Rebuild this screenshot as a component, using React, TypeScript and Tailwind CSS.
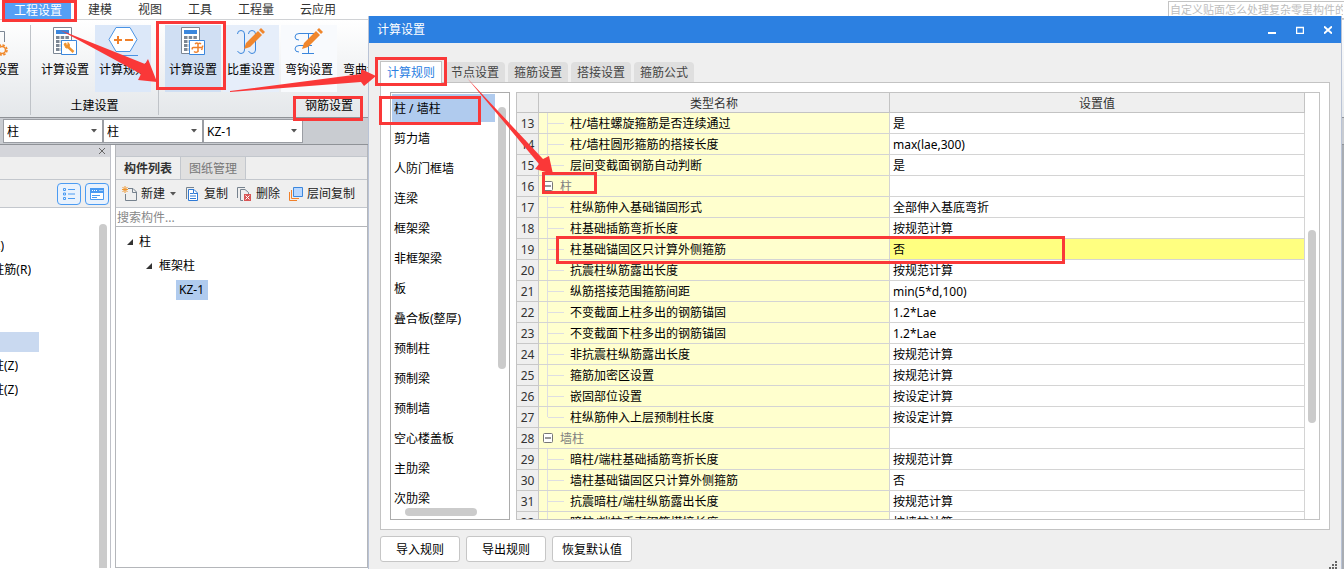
import type { ReactNode } from 'react';

const MENUS = ['建模', '视图', '工具', '工程量', '云应用'];

const DIALOG_TABS = ['节点设置', '箍筋设置', '搭接设置', '箍筋公式'];

const CATEGORIES = [
  '柱 / 墙柱', '剪力墙', '人防门框墙', '连梁', '框架梁', '非框架梁', '板',
  '叠合板(整厚)', '预制柱', '预制梁', '预制墙', '空心楼盖板', '主肋梁', '次肋梁',
];

type Row = { no: number; name: string; value?: string; group?: boolean; last?: boolean; active?: boolean };

const ROWS: Row[] = [
  { no: 13, name: '柱/墙柱螺旋箍筋是否连续通过', value: '是' },
  { no: 14, name: '柱/墙柱圆形箍筋的搭接长度', value: 'max(lae,300)' },
  { no: 15, name: '层间变截面钢筋自动判断', value: '是', last: true },
  { no: 16, name: '柱', group: true },
  { no: 17, name: '柱纵筋伸入基础锚固形式', value: '全部伸入基底弯折' },
  { no: 18, name: '柱基础插筋弯折长度', value: '按规范计算' },
  { no: 19, name: '柱基础锚固区只计算外侧箍筋', value: '否', active: true },
  { no: 20, name: '抗震柱纵筋露出长度', value: '按规范计算' },
  { no: 21, name: '纵筋搭接范围箍筋间距', value: 'min(5*d,100)' },
  { no: 22, name: '不变截面上柱多出的钢筋锚固', value: '1.2*Lae' },
  { no: 23, name: '不变截面下柱多出的钢筋锚固', value: '1.2*Lae' },
  { no: 24, name: '非抗震柱纵筋露出长度', value: '按规范计算' },
  { no: 25, name: '箍筋加密区设置', value: '按规范计算' },
  { no: 26, name: '嵌固部位设置', value: '按设定计算' },
  { no: 27, name: '柱纵筋伸入上层预制柱长度', value: '按设定计算', last: true },
  { no: 28, name: '墙柱', group: true },
  { no: 29, name: '暗柱/端柱基础插筋弯折长度', value: '按规范计算' },
  { no: 30, name: '墙柱基础锚固区只计算外侧箍筋', value: '否' },
  { no: 31, name: '抗震暗柱/端柱纵筋露出长度', value: '按规范计算' },
  { no: 32, name: '暗柱/端柱垂直钢筋搭接长度', value: '按墙柱计算' },
];

function GearIcon() {
  return (
    <svg width="30" height="30" viewBox="0 0 30 30" fill="none">
      <path d="M6 5.500h18.500V16" stroke="#7c8794" />
      <circle cx="22" cy="24" r="3.500" stroke="#f0882a" strokeWidth="1.500" />
      <circle cx="22" cy="24" r="5" stroke="#f0882a" strokeWidth="1.500" strokeDasharray="2.500 1.400" />
    </svg>
  );
}

function Calculator({ children }: { children: ReactNode }) {
  return (
    <svg width="30" height="30" viewBox="0 0 30 30" fill="none">
      <path d="M3.500 1.500h18v26h-18z" fill="#fff" stroke="#7c8794" />
      <path d="M6 4h13v4H6z" fill="#3b87dd" />
      <path d="M6 11.500h13M6 15.500h13M6 19.500h6M6 23.500h6" stroke="#7c8794" strokeWidth="3" strokeDasharray="3.500 1.200" />
      <path d="M11.500 14.500h15v14h-15z" fill="#fff" stroke="#3b87dd" />
      {children}
    </svg>
  );
}

function WrenchCalcIcon() {
  return (
    <Calculator>
      <path d="M17.500 20.500l6 5.500" stroke="#f0932f" strokeWidth="2.500" />
      <path d="M14 18l2-1v2h2v-2.500l1.500 2-.5 3-3 .5z" fill="#f0932f" stroke="#f0932f" />
    </Calculator>
  );
}

function RebarCalcIcon() {
  return (
    <Calculator>
      <path d="M17 18q2-2 3 0v7.500q-2 1.500-4 0M20 18q1.500-1.500 3 0M14.500 23.500q-1-2 1-2h8q1.500 0 1-2M23.500 24l1-2" stroke="#f0802a" strokeWidth="1.500" />
    </Calculator>
  );
}

function HexIcon() {
  return (
    <svg width="30" height="30" viewBox="0 0 30 30" fill="none">
      <path d="M8 1.500h14l7 12-7 12H8L1 13.500z" fill="#fff" stroke="#4a93e4" />
      <path d="M3 29.500h27" stroke="#4a93e4" />
      <path d="M6 14h8M10 10v8M17 14h8" stroke="#f0802a" strokeWidth="2" />
    </svg>
  );
}

function Pencil() {
  return <path d="M8 23l2-6L22 5l4 4-12 12zM23 4l2-2 4 4-2 2z" fill="#f0862c" />;
}

function WeightIcon() {
  return (
    <svg width="30" height="30" viewBox="0 0 30 30" fill="none">
      <path d="M1.500 8q0-3.500 3.500-3.500T8.500 8v16q0 3.500-3.500 3.500-2 0-3.500-2.500M12.500 8q0-3.500 3.500-3.500T19.500 8v16q0 3.500-3.500 3.500-2 0-3.500-2.500" stroke="#3b87dd" />
      <Pencil />
    </svg>
  );
}

function HookIcon() {
  return (
    <svg width="30" height="30" viewBox="0 0 30 30" fill="none">
      <path d="M20 7.500H5q-4 0-4 3.500 0 3 4 3M14.500 8v19M8 27.500h12M18 19.500H5q-4 0-4 3.500 0 3 4 3" stroke="#3b87dd" />
      <Pencil />
    </svg>
  );
}

function RibbonButton({ label, icon, tone = '' }: { label: string; icon?: ReactNode; tone?: string }) {
  return (
    <button className={`flex h-[67px] w-14 shrink-0 flex-col items-center pt-px whitespace-nowrap ${tone}`}>
      <span className="h-[34px]">{icon}</span>
      <span className="leading-5">{label}</span>
    </button>
  );
}

function RibbonGroup({ title, className, children }: { title: string; className: string; children?: ReactNode }) {
  return (
    <div className={`flex shrink-0 flex-col border-r border-[#bfc3c8] ${className}`}>
      <div className="flex gap-0.5">{children}</div>
      <div className="pt-1 pl-px text-center leading-5">{title}</div>
    </div>
  );
}

function Combo({ label, value }: { label: string; value: string }) {
  return (
    <div className="relative w-[100px]">
      <select
        aria-label={label}
        className="block h-6 w-full appearance-none border border-[#9a9da3] bg-white pt-px pl-[3px] outline-none"
      >
        <option>{value}</option>
      </select>
      <svg className="pointer-events-none absolute top-[10px] right-1.5" width="6" height="4" viewBox="0 0 6 4">
        <path d="M0 0h6L3 3.500z" fill="#555" />
      </svg>
    </div>
  );
}

function NewIcon() {
  return (
    <svg width="16" height="16" viewBox="0 0 16 16" fill="none">
      <path d="M6 2.500h5l3.500 3.500v8.500h-11V8M10.500 3v3.500H14" stroke="#76828e" />
      <path d="M.5 1l5 5M5.500 1l-5 5M3 0v7M0 3.500h6" stroke="#f0962e" />
    </svg>
  );
}

function CopyIcon() {
  return (
    <svg width="16" height="16" viewBox="0 0 16 16" fill="none">
      <path d="M2.500 13V1.500H10" stroke="#76828e" />
      <path d="M4.500 3.500H10l3.500 3.500v7.500h-9z" fill="#fff" stroke="#2f7ad6" />
      <path d="M9.500 4v3.500H13M6 7.500h3M6 10h6M6 12.500h6" stroke="#2f7ad6" />
    </svg>
  );
}

function DeleteIcon() {
  return (
    <svg width="16" height="16" viewBox="0 0 16 16" fill="none">
      <path d="M1.500 12V1.500H9M7 14.500H4.500v-11H9l3.500 3V8" stroke="#76828e" />
      <path d="M8 8h7v7H8z" fill="#d95555" />
      <path d="M9.500 9.500l4 4M13.500 9.500l-4 4" stroke="#fff" />
    </svg>
  );
}

function LayerIcon() {
  return (
    <svg width="16" height="16" viewBox="0 0 16 16" fill="none">
      <path d="M1.500 6v8.500H9M3.500 4v8.500H11" stroke="#f0802a" />
      <path d="M5.500 1.500h9v9h-9z" fill="#b9d8ff" stroke="#3b87dd" />
    </svg>
  );
}

function Expanded() {
  return (
    <svg width="6" height="6" viewBox="0 0 6 6">
      <path d="M6 0v6H0z" fill="#333" />
    </svg>
  );
}

function Ribbon() {
  return (
    <>
      <div className="flex h-5 shrink-0 items-center border-b border-[#d0d2d5] bg-white pl-[5px] leading-5">
        <button className="h-5 bg-[#559ff5] px-[9px] pt-px text-white">工程设置</button>
        <nav className="ml-[17px] flex gap-[26px] pt-px text-[#333]">
          {MENUS.map((m) => <button key={m}>{m}</button>)}
        </nav>
        <input
          aria-label="搜索帮助"
          placeholder="自定义贴面怎么处理复杂零星构件的"
          className="ml-auto h-[18px] w-44 border border-r-0 border-[#c4c4c4] px-px text-[11px] outline-none placeholder:text-[#bdbdbd]"
        />
      </div>
      <div className="flex h-[97px] shrink-0 overflow-hidden bg-linear-to-b from-white to-[#e4e7ea] pt-[5px] pb-0.5">
        <div className="flex w-[31px] shrink-0 justify-end border-r border-[#bfc3c8] pr-[7px]">
          <RibbonButton label="工程设置" icon={<GearIcon />} />
        </div>
        <RibbonGroup title="土建设置" className="pr-[7px] pl-1.5">
          <RibbonButton label="计算设置" icon={<WrenchCalcIcon />} />
          <RibbonButton label="计算规则" icon={<HexIcon />} tone="bg-[#dce8f9]" />
        </RibbonGroup>
        <RibbonGroup title="钢筋设置" className="w-[340px] px-1.5">
          <RibbonButton label="计算设置" icon={<RebarCalcIcon />} tone="bg-[#d0dff3]" />
          <RibbonButton label="比重设置" icon={<WeightIcon />} tone="bg-[#e6eefa]" />
          <RibbonButton label="弯钩设置" icon={<HookIcon />} tone="bg-[#f8fafd]" />
          <RibbonButton label="弯曲设置" />
        </RibbonGroup>
      </div>
      <div className="flex h-7 shrink-0 items-center border-y border-[#8f9297] bg-[#c9ccd1] pl-[3px]">
        <Combo label="楼层" value="柱" />
        <Combo label="构件类型" value="柱" />
        <Combo label="构件" value="KZ-1" />
      </div>
    </>
  );
}

function NavPanel() {
  return (
    <aside className="flex w-[111px] shrink-0 flex-col border-r border-[#bfc1c8] bg-white">
      <div className="flex h-3 items-center justify-end bg-[#d4d5da] pr-[5px]">
        <button aria-label="关闭">
          <svg width="6" height="6" viewBox="0 0 6 6"><path d="M0 0l6 6M6 0L0 6" stroke="#666" /></svg>
        </button>
      </div>
      <div className="h-[23px] border-b border-[#c3c7cd] bg-[#efefef]" />
      <div className="flex h-7 items-center justify-end gap-1 border-b border-[#c3c7cd] bg-[#efefef] pr-px">
        <button aria-label="列表" className="rounded border border-[#4b9bf2] bg-[#e9f2fd] px-[3px] py-0.5">
          <svg width="16" height="16" viewBox="0 0 16 16" fill="none">
            <path d="M2.500 2.500h2v2h-2zM2.500 7h2v2h-2zM2.500 11.500h2v2h-2zM7 3.500h7M7 8h7M7 12.500h7" stroke="#4b9bf2" />
          </svg>
        </button>
        <button aria-label="窗口" className="rounded border border-[#4b9bf2] bg-[#e9f2fd] px-[3px] py-0.5">
          <svg width="16" height="16" viewBox="0 0 16 16" fill="none">
            <path d="M1.500 2.500h13v11h-13z" fill="#fff" stroke="#4b9bf2" />
            <path d="M1 2h14v5H1z" fill="#4b9bf2" />
            <path d="M3 4.500h5M10.500 4.500h3" stroke="#fff" strokeDasharray="1 1" />
            <path d="M3 9.500h8M3 11.500h5" stroke="#4b9bf2" />
          </svg>
        </button>
      </div>
      <div className="flex min-h-0 flex-1 justify-between overflow-hidden pr-[3px]">
        <ul className="w-[39px] pt-[26px] leading-6 whitespace-nowrap">
          <li className="flex h-6 w-1 justify-end overflow-hidden">柱(Z)</li>
          <li className="flex h-6 w-[31px] justify-end overflow-hidden">柱筋(R)</li>
          <li className="h-6" />
          <li className="h-6" />
          <li className="flex h-6 items-center"><span className="h-5 w-full bg-[#c9d9f0]" /></li>
          <li className="flex h-6 w-[18px] justify-end overflow-hidden">柱(Z)</li>
          <li className="flex h-6 w-[18px] justify-end overflow-hidden">柱(Z)</li>
        </ul>
        <div className="mt-4 w-2 rounded-t bg-[#cbcbcb]" />
      </div>
    </aside>
  );
}

function ComponentPanel() {
  return (
    <section className="ml-1 flex w-[253px] shrink-0 flex-col border-x border-b border-[#b4b6ba] bg-white">
      <div className="h-3 border-b border-[#c3c7cd] bg-[#d4d5da]" />
      <div className="flex h-[23px] border-b border-[#c3c7cd] bg-[#efefef]">
        <button className="w-[65px] border-r border-[#c3c7cd] pt-px font-bold text-[#333]">构件列表</button>
        <button className="w-[65px] border-r border-[#c3c7cd] bg-[#e0e0e0] pt-px text-[#777]">图纸管理</button>
      </div>
      <div className="flex h-7 items-center gap-2 border-b border-[#c3c7cd] bg-[#efefef] pt-px pl-1.5 text-[#222]">
        <button className="flex items-center gap-[3px]">
          <NewIcon />新建
          <svg className="ml-0.5" width="6" height="4" viewBox="0 0 6 4"><path d="M0 0h6L3 3.500z" fill="#555" /></svg>
        </button>
        <button className="flex items-center gap-1"><CopyIcon />复制</button>
        <button className="flex items-center gap-1"><DeleteIcon />删除</button>
        <button className="flex items-center gap-[3px]"><LayerIcon />层间复制</button>
      </div>
      <input
        aria-label="搜索构件"
        placeholder="搜索构件..."
        className="h-[19px] border-b border-[#b4b6ba] px-px pt-px outline-none placeholder:text-[#888]"
      />
      <ul className="pt-[3px] leading-6">
        <li className="flex h-6 items-center gap-1.5 pl-[11px]"><Expanded />柱</li>
        <li className="flex h-6 items-center gap-[7px] pl-[30px]"><Expanded />框架柱</li>
        <li className="flex h-6 items-center pl-[60px]"><span className="bg-[#b0cbee] pr-1 pl-[3px] leading-5">KZ-1</span></li>
      </ul>
    </section>
  );
}

function SettingRow({ row }: { row: Row }) {
  return (
    <tr className="h-[21px]">
      <td className="border-r border-b border-[#c8c8c8] bg-[#efefef] px-0 pt-0.5 pb-0 text-center text-[#333]">{row.no}</td>
      <td className="border-r border-b border-[#d4d4d4] bg-[#ffffce] p-0">
        {row.group ? (
          <div className="flex h-5 items-center gap-[7px] pl-1 text-[#808080]">
            <svg width="10" height="10" viewBox="0 0 10 10" fill="none">
              <rect x=".5" y=".5" width="9" height="9" rx="1" fill="#fff" stroke="#777" />
              <path d="M2 5h6" stroke="#333" />
            </svg>
            <span className="pt-0.5">{row.name}</span>
          </div>
        ) : (
          <div className="flex h-5 items-center pl-2">
            <span className={row.last ? 'h-2.5 w-px self-start bg-[#dedee2]' : 'h-5 w-px bg-[#dedee2]'} />
            <span className="mr-1.5 h-px w-4 bg-[#dedee2]" />
            <span className="pt-0.5">{row.name}</span>
          </div>
        )}
      </td>
      <td className={`border-r border-b border-[#d4d4d4] pt-0.5 pr-0 pb-0 pl-[3px] ${row.active ? 'bg-[#ffff80]' : 'bg-white'}`}>
        {row.value}
      </td>
    </tr>
  );
}

function SettingsDialog() {
  return (
    <div role="dialog" aria-label="计算设置"
      className="absolute top-4 right-[2px] bottom-0 left-[368px] flex flex-col border-x border-[#b9c3d6] bg-[#efefef]">
      <div className="flex h-[27px] shrink-0 items-center bg-[#2c80e1] pr-[9px] pl-2 text-white">
        <h1>计算设置</h1>
        <div className="ml-auto flex gap-5">
          <button aria-label="最小化">
            <svg width="8" height="8" viewBox="0 0 8 8"><path d="M0 7h8" stroke="#fff" strokeWidth="2" /></svg>
          </button>
          <button aria-label="最大化">
            <svg width="8" height="8" viewBox="0 0 8 8" fill="none"><path d="M.5 1v6.500h7V1M0 1.500h8" stroke="#fff" strokeWidth="1.500" /></svg>
          </button>
          <button aria-label="关闭">
            <svg width="8" height="8" viewBox="0 0 8 8"><path d="M0 .5l8 7M8 .5l-8 7" stroke="#fff" strokeWidth="2" /></svg>
          </button>
        </div>
      </div>

      <div className="flex min-h-0 flex-1 flex-col px-[11px] pt-[18px]">
        <div className="flex h-[21px] shrink-0 items-end gap-[3px]">
          <button className="z-10 -mb-px h-[22px] w-[62px] border border-b-0 border-[#c3c3c3] bg-white text-[#2c80e1]">计算规则</button>
          {DIALOG_TABS.map((t) => (
            <button key={t} className="h-5 w-[60px] rounded-t bg-[#dfdfdf] pt-px text-[#444]">{t}</button>
          ))}
        </div>

        <div className="flex min-h-0 flex-1 gap-1.5 border border-[#c3c3c3] bg-white p-[9px]">
          <div className="flex w-[120px] shrink-0 flex-col border border-[#acacac] p-px">
            <div className="flex min-h-0 flex-1 justify-between overflow-hidden pr-0.5">
              <ul className="w-[103px] leading-[26px]">
                {CATEGORIES.map((c, i) => (
                  <li key={c} className={i === 0 ? 'mb-0.5 h-7 bg-[#b0cbee] pt-0.5 pl-0.5' : 'mb-0.5 h-7 pt-0.5 pl-0.5'}>{c}</li>
                ))}
              </ul>
              <div className="mt-[13px] h-[262px] w-2 rounded bg-[#cbcbcb]" />
            </div>
            <div className="mb-0.5 ml-[13px] h-2 w-[72px] rounded bg-[#cbcbcb]" />
          </div>

          <div className="flex min-w-0 flex-1 border border-[#c3c3c3]">
            <div className="min-w-0 flex-1 overflow-hidden">
              <table className="w-full table-fixed border-separate border-spacing-0 leading-[18px]">
                <colgroup>
                  <col className="w-[22px]" />
                  <col className="w-[351px]" />
                  <col />
                </colgroup>
                <thead>
                  <tr className="h-5 bg-[#efefef] leading-[17px] text-[#333]">
                    <th className="border-r border-b border-[#c3c3c3] p-0" />
                    <th className="border-r border-b border-[#c3c3c3] px-0 pt-0.5 pb-0 font-normal">类型名称</th>
                    <th className="border-r border-b border-[#c3c3c3] px-0 pt-0.5 pb-0 font-normal">设置值</th>
                  </tr>
                </thead>
                <tbody>
                  {ROWS.map((r) => <SettingRow key={r.no} row={r} />)}
                </tbody>
              </table>
            </div>
            <div className="flex w-3.5 justify-center pt-[137px]">
              <div className="h-[193px] w-2 rounded bg-[#cbcbcb]" />
            </div>
          </div>
        </div>

        <div className="flex h-[39px] shrink-0 items-start gap-1.5 pt-1.5">
          {['导入规则', '导出规则', '恢复默认值'].map((b) => (
            <button key={b} className="h-[26px] w-20 rounded-[3px] border border-[#c6c6c6] bg-white pt-0.5">{b}</button>
          ))}
          <svg className="mt-auto -mr-2 ml-auto" width="9" height="8" viewBox="0 0 9 8">
            <path d="M6 1h2M3 4h2M6 4h2M0 7h2M3 7h2M6 7h2" stroke="#666" strokeWidth="2" />
          </svg>
        </div>
      </div>
    </div>
  );
}

// Tutorial marks drawn over the windows
function Annotations() {
  return (
    <svg className="pointer-events-none absolute top-0 left-0" width="1080" height="280" viewBox="0 0 1080 280" fill="none">
      <g stroke="#fa3838" strokeWidth="3">
        <rect x="3.500" y="1.500" width="72" height="19" />
        <rect x="157.500" y="22.500" width="67" height="66" />
        <rect x="294.500" y="97.500" width="67" height="22" />
        <rect x="376.500" y="58.500" width="69" height="26" />
        <rect x="380.500" y="97.500" width="99" height="26" />
        <rect x="543.500" y="173.500" width="52" height="19" />
        <rect x="557.500" y="237.500" width="506" height="25" />
      </g>
      <g fill="#fa3838">
        <path d="M60 30l85 34 3-5 9 23-19-2 3-6z" />
        <path d="M230 91l131-17v-5l15 7-12 10-3-4-131 10z" />
        <path d="M467 78l76 81 6-3 4 18-18-5 4-5z" />
      </g>
    </svg>
  );
}

export default function App() {
  return (
    <div className="relative flex h-screen flex-col overflow-hidden bg-[#a9adb3] font-['Noto_Sans','Noto_Sans_CJK_SC',sans-serif] text-xs text-black">
      <Ribbon />
      <div className="flex min-h-0 flex-1">
        <div className="flex bg-white pb-px">
          <NavPanel />
          <ComponentPanel />
        </div>
      </div>
      <SettingsDialog />
      <Annotations />
    </div>
  );
}
